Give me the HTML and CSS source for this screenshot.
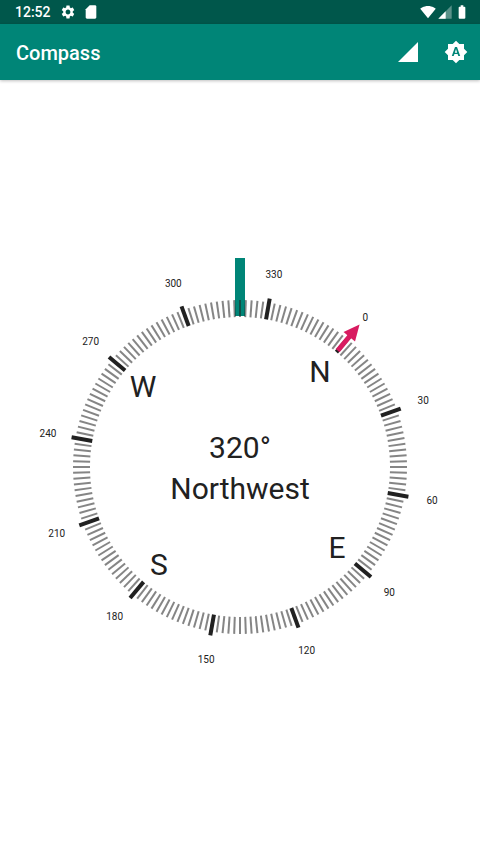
FILE: index.html

```html
<!DOCTYPE html>
<html lang="en">
<head>
  <meta charset="UTF-8">
  <meta name="viewport" content="width=device-width, initial-scale=1.0">
  <title>Compass</title>
  <link rel="stylesheet" href="styles.css">
</head>
<body>
  <div class="status-bar">
    <span class="clock">12:52</span>
    <svg class="status-icon gear" viewBox="0 0 24 24"><path d="M19.14 12.94c.04-.3.06-.61.06-.94 0-.32-.02-.64-.07-.94l2.03-1.58c.18-.14.23-.41.12-.61l-1.92-3.32c-.12-.22-.37-.29-.59-.22l-2.39.96c-.5-.38-1.03-.7-1.62-.94l-.36-2.54c-.04-.24-.24-.41-.48-.41h-3.84c-.24 0-.43.17-.47.41l-.36 2.54c-.59.24-1.13.57-1.62.94l-2.39-.96c-.22-.08-.47 0-.59.22L2.74 8.87c-.12.21-.08.47.12.61l2.03 1.58c-.05.3-.09.63-.09.94s.02.64.07.94l-2.03 1.58c-.18.14-.23.41-.12.61l1.92 3.32c.12.22.37.29.59.22l2.39-.96c.5.38 1.03.7 1.62.94l.36 2.54c.05.24.24.41.48.41h3.84c.24 0 .44-.17.47-.41l.36-2.54c.59-.24 1.13-.56 1.62-.94l2.39.96c.22.08.47 0 .59-.22l1.92-3.32c.12-.22.07-.47-.12-.61l-2.01-1.58zM12 15.6c-1.98 0-3.6-1.62-3.6-3.6s1.62-3.6 3.6-3.6 3.6 1.62 3.6 3.6-1.62 3.6-3.6 3.6z"/></svg>
    <svg class="status-icon sd" viewBox="0 0 24 24"><path d="M18 2h-8L4.02 8 4 20c0 1.1.9 2 2 2h12c1.1 0 2-.9 2-2V4c0-1.1-.9-2-2-2z"/></svg>
    <div class="status-right">
      <svg class="status-icon" viewBox="0 0 24 24"><path d="M12.01 21.49L23.64 7c-.45-.34-4.93-4-11.64-4C5.28 3 .81 6.66.36 7l11.64 14.5.01-.01z"/></svg>
      <svg class="status-icon signal" viewBox="0 0 24 24"><path class="faded" d="M2 22h20V2z"/><path d="M2 22h11V11z"/></svg>
      <svg class="status-icon battery" viewBox="0 0 24 24"><path d="M15.67 4H14V2h-4v2H8.33C7.6 4 7 4.6 7 5.33v15.33C7 21.4 7.6 22 8.33 22h7.33c.74 0 1.34-.6 1.34-1.33V5.33C17 4.6 16.4 4 15.67 4z"/></svg>
    </div>
  </div>

  <header class="app-bar">
    <h1>Compass</h1>
    <svg class="action-icon" viewBox="0 0 24 24"><path d="M2 22h20V2z"/></svg>
    <svg class="action-icon" viewBox="0 0 24 24"><path d="M10.85 12.65h2.3L12 9l-1.15 3.65zM20 8.69V4h-4.69L12 .69 8.69 4H4v4.69L.69 12 4 15.31V20h4.69L12 23.31 15.31 20H20v-4.69L23.31 12 20 8.69zM14.3 16l-.7-2h-3.2l-.7 2H7.8L11 7h2l3.2 9h-1.9z"/></svg>
  </header>

  <main class="content">
    <svg id="dial" class="dial" viewBox="-240 -240 480 480">
      <rect class="needle" x="-5" y="-209" width="10" height="58"/>
      <g id="ticks"></g>
      <g id="labels"></g>
      <g id="north" class="north">
        <rect x="-2.5" y="-172" width="5" height="20"/>
        <polygon points="0,-186 7.5,-170 -7.5,-170"/>
      </g>
      <text class="letter" x="80" y="-96">N</text>
      <text class="letter" x="97" y="80">E</text>
      <text class="letter" x="-81" y="97">S</text>
      <text class="letter" x="-97" y="-81">W</text>
      <text class="readout" x="0" y="-20">320°</text>
      <text class="readout" x="0" y="21">Northwest</text>
    </svg>
  </main>

  <script src="compass.js"></script>
</body>
</html>
```

FILE: styles.css

```css
/* Compass screen */
body {
  font-family: Roboto, "Liberation Sans", sans-serif;
  background-color: #fff;
  margin: 0;
  padding: 0;
  height: 854px;
  display: flex;
  flex-direction: column;
  overflow: hidden;
}

.status-bar {
  display: flex;
  align-items: center;
  height: 24px;
  padding: 0 10px 0 15px;
  background-color: #00574b;
  color: #fff;
  flex-shrink: 0;
}

.clock {
  font-size: 14px;
  font-weight: 500;
  width: 45px;
}

.status-icon {
  display: block;
  width: 16px;
  height: 16px;
  fill: #fff;
}

.status-icon.sd {
  margin-left: 7px;
}

.status-right {
  display: flex;
  align-items: center;
  gap: 1px;
  margin-left: auto;
}

.signal .faded {
  opacity: 0.35;
}

.app-bar {
  display: flex;
  align-items: center;
  gap: 20px;
  height: 56px;
  padding: 0 12px 0 16px;
  background-color: #008577;
  box-shadow: 0 1px 3px rgba(0, 0, 0, 0.25);
  flex-shrink: 0;
  position: relative;
}

.app-bar h1 {
  flex: 1;
  margin: 0;
  padding-top: 2px;
  color: #fff;
  font-size: 20px;
  font-weight: 500;
}

.action-icon {
  display: block;
  width: 24px;
  height: 24px;
  fill: #fff;
  margin-left: 4px;
}

.content {
  flex: 1;
  display: flex;
  align-items: center;
  justify-content: center;
}

.dial {
  display: block;
  width: 480px;
  height: 480px;
}

.needle {
  fill: #008577;
}

.minor-tick {
  stroke: rgba(33, 33, 33, 0.55);
  stroke-width: 2;
}

.major-tick {
  stroke: #212121;
  stroke-width: 4;
}

.north {
  fill: #d81b60;
}

.degree-label {
  font-size: 10px;
  fill: #212121;
  text-anchor: middle;
  dominant-baseline: central;
}

.letter,
.readout {
  font-size: 30px;
  fill: #212121;
  text-anchor: middle;
  dominant-baseline: central;
}
```

FILE: compass.js

```js
// Draws the dial ticks and degree labels for the current heading
const heading = 320;
const svgNS = 'http://www.w3.org/2000/svg';
const ticks = document.getElementById('ticks');
const labels = document.getElementById('labels');

function polar(radius, degrees) {
  const rad = (degrees - heading) * Math.PI / 180;
  return [radius * Math.sin(rad), -radius * Math.cos(rad)];
}

for (let d = 0; d < 360; d += 2) {
  const major = d % 30 === 0;
  const [x1, y1] = polar(150, d);
  const [x2, y2] = polar(major ? 171 : 167, d);
  const line = document.createElementNS(svgNS, 'line');
  line.setAttribute('x1', x1);
  line.setAttribute('y1', y1);
  line.setAttribute('x2', x2);
  line.setAttribute('y2', y2);
  line.setAttribute('class', major ? 'major-tick' : 'minor-tick');
  ticks.appendChild(line);

  if (major) {
    const [x, y] = polar(195, d);
    const label = document.createElementNS(svgNS, 'text');
    label.setAttribute('x', x);
    label.setAttribute('y', y);
    label.setAttribute('class', 'degree-label');
    label.textContent = d;
    labels.appendChild(label);
  }
}

document.getElementById('north').setAttribute('transform', `rotate(${-heading})`);
```
